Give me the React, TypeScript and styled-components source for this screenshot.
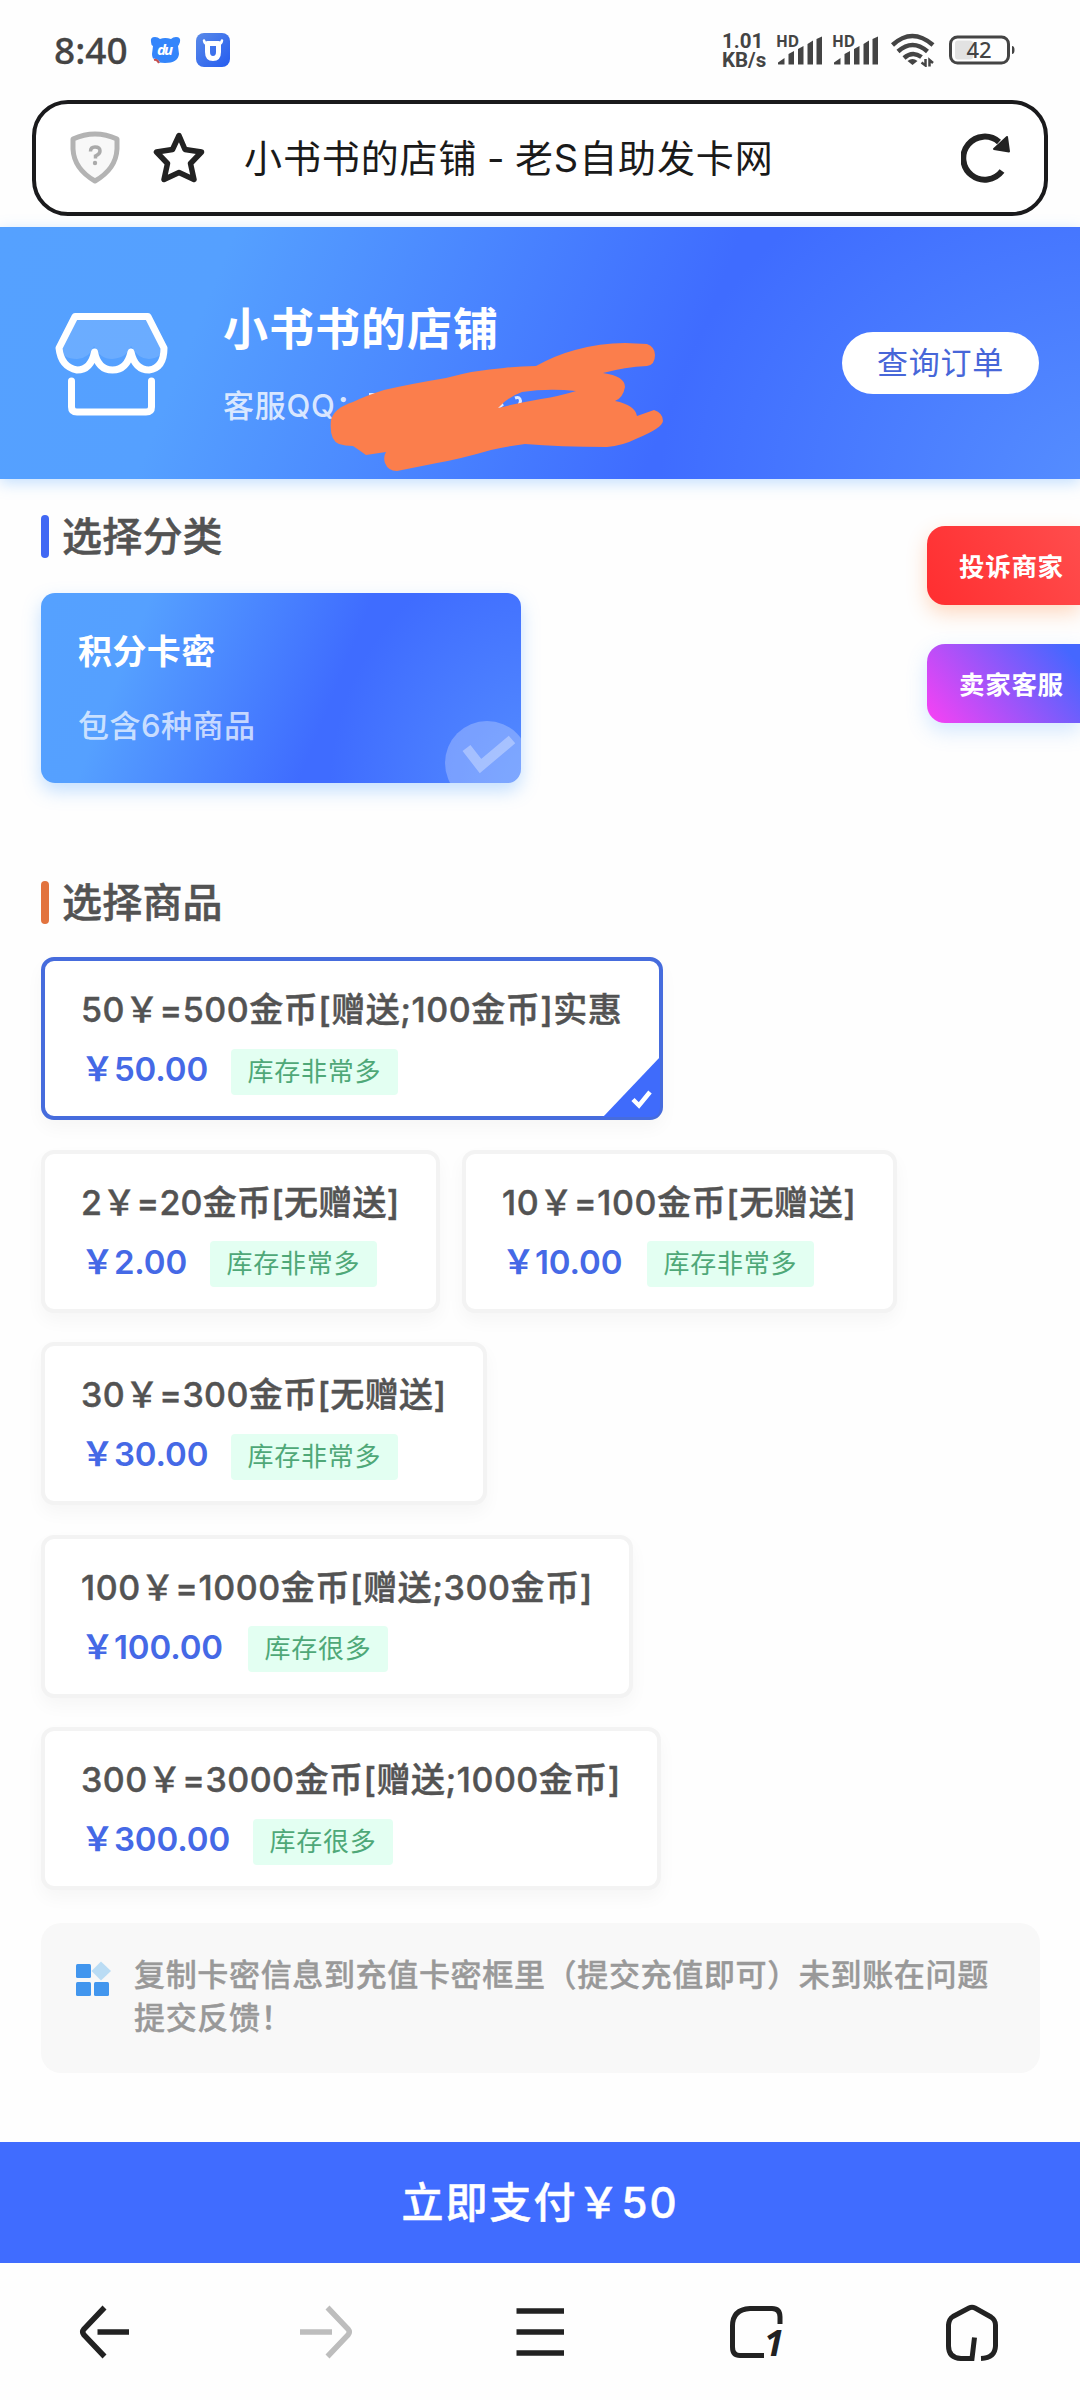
import React from 'react';
import styled, { createGlobalStyle } from 'styled-components';

const GlobalStyle = createGlobalStyle`
  * { box-sizing: border-box; }
  html, body { margin: 0; padding: 0; background: #fefefe; }
  body { font-family: Inter, "Noto Sans CJK SC", sans-serif; color: #555; }
  svg { display: block; flex: none; }
`;

const Screen = styled.div`
  width: 1080px;
  height: 2400px;
  display: flex;
  flex-direction: column;
  overflow: hidden;
  background: #fefefe;
`;

/* ---------- status bar ---------- */
const StatusBar = styled.div`
  height: 100px;
  padding: 0 65px 0 54px;
  display: flex;
  align-items: center;
  justify-content: space-between;
`;
const StatusGroup = styled.div`
  display: flex;
  align-items: center;
`;
const Clock = styled.span`
  width: 96px;
  font: 500 37px/50px "Noto Sans", sans-serif;
  color: #444;
  -webkit-text-stroke: 0.3px #444;
`;
const NetSpeed = styled.div`
  width: 54px;
  font: 700 20.5px/19.5px Roboto, sans-serif;
  color: #444;
  display: flex;
  flex-direction: column;
  padding-top: 2px;
`;
const SvgText = styled.text`
  font-family: "Noto Sans", sans-serif;
`;
const OverflowIcon = styled.svg`
  overflow: visible;
`;

/* ---------- address bar ---------- */
const AddressBar = styled.div`
  height: 116px;
  margin: 0 32px 11px;
  border: 4px solid #1a1a1c;
  border-radius: 36px;
  background: #fff;
  display: flex;
  align-items: center;
  padding: 0 33px 0 34px;
`;
const StarIcon = styled.svg`
  margin-left: 33px;
`;
const PageTitle = styled.span`
  flex: 1;
  margin-left: 39px;
  font-size: 38px;
  line-height: 50px;
  letter-spacing: 0.9px;
  word-spacing: -2px;
  color: #1a1a1a;
  white-space: pre;
`;

/* ---------- shop header ---------- */
const ShopHeader = styled.header`
  position: relative;
  height: 252px;
  flex: none;
  padding: 0 41px 0 54px;
  display: flex;
  align-items: center;
  background:
    radial-gradient(ellipse 42% 150% at 103% 105%, #568fff 0%, rgba(86, 143, 255, 0) 100%),
    linear-gradient(112deg, #55a1ff 0%, #55a0ff 20%, #3f6cff 63%);
  box-shadow: 0 4px 14px rgba(85, 165, 255, 0.35);
`;
const ShopIcon = styled.svg`
  margin-top: 24px;
`;
const ShopInfo = styled.div`
  flex: 1;
  margin-left: 54px;
  display: flex;
  flex-direction: column;
  gap: 26px;
  padding-top: 23px;
`;
const ShopName = styled.h1`
  margin: 0;
  font-size: 45px;
  line-height: 56px;
  font-weight: 700;
  letter-spacing: 1px;
  color: #fff;
`;
const ShopContact = styled.div`
  font-size: 31px;
  line-height: 44px;
  font-weight: 500;
  letter-spacing: 0.7px;
  color: rgba(255, 255, 255, 0.8);
`;
const OrderButton = styled.button`
  width: 197px;
  height: 62px;
  margin-top: 20px;
  border: 0;
  border-radius: 31px;
  background: #fff;
  color: #4766d8;
  font: 400 31px/60px Inter, "Noto Sans CJK SC", sans-serif;
  letter-spacing: 0.8px;
  padding: 0;
`;
const Scribble = styled.svg`
  position: absolute;
  left: 320px;
  top: 103px;
`;

/* ---------- floating side buttons ---------- */
const SideDock = styled.div`
  position: absolute;
  right: 0;
  top: 47px;
  display: flex;
  flex-direction: column;
  gap: 39px;
`;
const SideButton = styled.button<{ $bg: string; $glow: string }>`
  width: 153px;
  height: 79px;
  border: 0;
  border-radius: 18px 0 0 18px;
  background: ${(p) => p.$bg};
  box-shadow: 0 8px 20px ${(p) => p.$glow};
  color: #fff;
  font: 700 25.5px/40px Inter, "Noto Sans CJK SC", sans-serif;
  letter-spacing: 0.7px;
  padding: 2px 0 0 32px;
  text-align: left;
`;

/* ---------- body ---------- */
const Content = styled.main`
  position: relative;
  height: 1663px;
  flex: none;
  padding: 34px 40px 0 41px;
`;
const SectionTitle = styled.h2<{ $accent: string }>`
  margin: 0;
  height: 46px;
  display: flex;
  align-items: center;
  gap: 13px;
  font-size: 40px;
  line-height: 46px;
  font-weight: 500;
  letter-spacing: 0.2px;
  color: #535353;
  -webkit-text-stroke: 0.5px #535353;
  &::before {
    content: '';
    width: 8px;
    height: 43px;
    border-radius: 4px;
    background: ${(p) => p.$accent};
  }
`;
const SectionLabel = styled.span`
  padding-top: 1px;
`;
const CategoryCard = styled.div`
  position: relative;
  width: 480px;
  height: 190px;
  margin: 34px 0 96px;
  padding: 36px 37px 0;
  border-radius: 14px;
  overflow: hidden;
  background:
    radial-gradient(ellipse 45% 130% at 105% 105%, #568fff 0%, rgba(86, 143, 255, 0) 100%),
    linear-gradient(112deg, #55a1ff 0%, #55a0ff 20%, #3f6cff 60%);
  box-shadow: 0 8px 18px rgba(85, 165, 255, 0.35);
`;
const CategoryName = styled.div`
  font-size: 34px;
  line-height: 46px;
  font-weight: 700;
  letter-spacing: 0.4px;
  color: #fff;
`;
const CategoryCount = styled.div`
  margin-top: 28px;
  font-size: 31px;
  line-height: 46px;
  font-weight: 500;
  letter-spacing: 0.5px;
  color: rgba(255, 255, 255, 0.7);
`;
const CategoryCheck = styled.svg`
  position: absolute;
  right: 0;
  bottom: 0;
`;

const ProductList = styled.div`
  display: flex;
  flex-wrap: wrap;
  gap: 29.5px 22px;
  margin-top: 32px;
`;
const ProductCard = styled.div<{ $selected?: boolean; $width: number }>`
  position: relative;
  width: ${(p) => p.$width}px;
  height: 163px;
  border: 4px solid ${(p) => (p.$selected ? '#466cdd' : '#f3f3f3')};
  border-radius: 13px;
  background: #fff;
  box-shadow: 0 8px 18px rgba(0, 0, 0, 0.035);
  padding: 25px 0 0 36px;
`;
const ProductName = styled.div<{ $spacing: number }>`
  font-size: 34px;
  line-height: 48px;
  font-weight: 500;
  letter-spacing: ${(p) => p.$spacing}px;
  color: #535353;
  -webkit-text-stroke: 0.45px #535353;
  white-space: nowrap;
`;
const ProductMeta = styled.div`
  display: flex;
  align-items: center;
  margin-top: 11px;
  height: 48px;
`;
const Price = styled.span<{ $width: number }>`
  width: ${(p) => p.$width}px;
  font-size: 33px;
  line-height: 46px;
  font-weight: 600;
  letter-spacing: -0.1px;
  color: #4569e6;
  white-space: nowrap;
`;
const Stock = styled.span`
  height: 46px;
  margin-top: 5px;
  padding: 0 16.5px;
  border-radius: 4px;
  background: #e3fff2;
  color: #4fa878;
  font-size: 26px;
  line-height: 46px;
  letter-spacing: 0.75px;
  white-space: nowrap;
`;
const SelectedCorner = styled.svg`
  position: absolute;
  right: -1px;
  bottom: -1px;
`;

const Notice = styled.div`
  margin-top: 33px;
  height: 150px;
  padding: 31px 40px 0 35px;
  border-radius: 20px;
  background: #f8f8f8;
  display: flex;
  align-items: flex-start;
  gap: 23px;
`;
const NoticeText = styled.p`
  margin: 0;
  font-size: 31px;
  line-height: 42.5px;
  font-weight: 500;
  letter-spacing: 0.66px;
  color: #999;
  -webkit-text-stroke: 0.4px #999;
`;
const NoticeIcon = styled.svg`
  margin-top: 7px;
`;

const PayBar = styled.button`
  height: 121px;
  flex: none;
  border: 0;
  padding: 0;
  background: #406cff;
  color: #fff;
  font: 500 42px/60px Inter, "Noto Sans CJK SC", sans-serif;
  letter-spacing: 2px;
  -webkit-text-stroke: 0.5px #fff;
`;
const BrowserNav = styled.nav`
  flex: 1;
  display: grid;
  grid-template-columns: repeat(5, 216px);
  justify-items: center;
  align-items: center;
  padding-bottom: 1px;
  background: #fefefe;
`;

const Bars = () => (
  <OverflowIcon width="56" height="34" viewBox="0 0 56 34" fill="#444">
    <SvgText x="0" y="13.5" fontSize="15.5" fontWeight="700">HD</SvgText>
    <path d="M2 31V29.5L8.500 25V31.500H3Q2 31.500 2 31ZM12.500 31.500V21L18 18V31.500ZM22 31.500V16L27.500 13V31.500ZM31.500 31.500V11L37 7.500V31.500ZM40.500 31.500V6L46 3.500V31.500Z" />
  </OverflowIcon>
);

interface Product {
  name: string;
  price: string;
  stock: string;
  width: number;
  spacing: number;
  priceWidth: number;
  selected?: boolean;
}

const products: Product[] = [
  { name: '50￥=500金币[赠送;100金币]实惠', price: '￥50.00', stock: '库存非常多', width: 622, spacing: 0.52, priceWidth: 150, selected: true },
  { name: '2￥=20金币[无赠送]', price: '￥2.00', stock: '库存非常多', width: 399, spacing: 0.25, priceWidth: 129 },
  { name: '10￥=100金币[无赠送]', price: '￥10.00', stock: '库存非常多', width: 435, spacing: 0.62, priceWidth: 145 },
  { name: '30￥=300金币[无赠送]', price: '￥30.00', stock: '库存非常多', width: 446, spacing: 0.36, priceWidth: 150 },
  { name: '100￥=1000金币[赠送;300金币]', price: '￥100.00', stock: '库存很多', width: 592, spacing: 0.58, priceWidth: 167 },
  { name: '300￥=3000金币[赠送;1000金币]', price: '￥300.00', stock: '库存很多', width: 620, spacing: 0.5, priceWidth: 172 },
];

export default function App() {
  return (
    <Screen>
      <GlobalStyle />
      <StatusBar>
        <StatusGroup>
          <Clock>8:40</Clock>
          <svg width="46" height="34" viewBox="0 0 46 34">
            <path d="M1 9Q0 4 5 4Q8 4 10 6Q15 4 21 6Q23 4 26 4Q31 4 30 9Q29 12 28 13L29 21Q28 30 15 30Q2 30 2 21L3 13Q1 12 1 9Z" fill="#3385fb" />
            <path d="M2 26Q6 24 10 29L5 30Z" fill="#fff" />
            <path d="M4 27Q7 26 9 30" fill="none" stroke="#c5504e" strokeWidth="2" />
            <SvgText x="7" y="22" fontSize="15" fontWeight="700" fontStyle="italic" fill="#fff" textLength="16">du</SvgText>
          </svg>
          <svg width="34" height="34" viewBox="0 0 34 34">
            <defs>
              <linearGradient id="ox" x1="0" y1="0" x2="1" y2="1">
                <stop offset="0" stopColor="#5a8ae8" />
                <stop offset="1" stopColor="#245cf0" />
              </linearGradient>
            </defs>
            <rect width="34" height="34" rx="8" fill="url(#ox)" />
            <path d="M8 7.500Q8.500 11 12 11M26 7.500Q25.500 11 22 11" stroke="#fff" strokeWidth="2.500" fill="none" strokeLinecap="round" />
            <path d="M11.500 10.500H22.500V19Q22.500 25.500 17 25.500Q11.500 25.500 11.500 19Z" fill="none" stroke="#fff" strokeWidth="5" strokeLinejoin="round" />
          </svg>
        </StatusGroup>
        <StatusGroup>
          <NetSpeed>
            <span>1.01</span>
            <span>KB/s</span>
          </NetSpeed>
          <Bars />
          <Bars />
          <svg width="60" height="34" viewBox="0 0 60 34" fill="none" stroke="#444" strokeWidth="4.500">
            <path d="M4.500 12Q24 -6 45 12" />
            <path d="M10 18.500Q24.500 5.500 39.500 18.500" />
            <path d="M16 25Q24.500 17.500 33.500 24" />
            <path d="M24.500 32L19.500 28Q24.500 24 29.500 28Z" fill="#444" stroke="none" />
            <path d="M37.500 26V32.500L33.500 29.500M41.500 33.500V27L45 30" strokeWidth="2.500" />
          </svg>
          <svg width="67" height="34" viewBox="0 0 67 34">
            <rect x="2.500" y="4" width="58" height="26" rx="7" fill="none" stroke="#444" strokeWidth="3" />
            <rect x="7" y="7.500" width="18" height="19" rx="3" fill="#e2e2e2" />
            <path d="M64 13Q66.500 13 66.500 17Q66.500 21 64 21Z" fill="#444" />
            <SvgText x="18.500" y="25" fontSize="22" fontWeight="500" fill="#444">42</SvgText>
          </svg>
        </StatusGroup>
      </StatusBar>

      <AddressBar>
        <svg width="50" height="54" viewBox="0 0 50 54">
          <path d="M3 8Q25 -2 47 8V18Q46 38 25 50Q4 38 3 18Z" fill="#f8f8f8" stroke="#b3b3b3" strokeWidth="5" strokeLinejoin="round" />
          <path d="M20.500 20.500Q20.500 16 25 16Q30 16 30 20Q30 23 25.500 25V27.500" fill="none" stroke="#aaa" strokeWidth="3.500" />
          <circle cx="25" cy="32" r="2.200" fill="#aaa" />
        </svg>
        <StarIcon width="52" height="54" viewBox="0 0 52 54">
          <path d="M26 4.500L32 18.500L48.500 21L37.500 32.500L41 48.500L26 41.500L11 48.500L14.500 32.500L3.500 21L19.500 18.500Z" fill="none" stroke="#222" strokeWidth="5.500" strokeLinejoin="round" />
        </StarIcon>
        <PageTitle>小书书的店铺 - 老S自助发卡网</PageTitle>
        <svg width="50" height="54" viewBox="0 0 50 54">
          <path d="M41 40A21.500 21.500 0 1 1 38 11" fill="none" stroke="#222" strokeWidth="6" />
          <path d="M46 6L48 20.500L33 18Z" fill="#222" stroke="#222" strokeWidth="2" strokeLinejoin="round" />
        </svg>
      </AddressBar>

      <ShopHeader>
        <ShopIcon width="115" height="110" viewBox="0 0 115 110">
          <path d="M21 6L7 38Q8 49 23 49Q36 48 40 36Q46 49 58 49Q73 48 77 36Q84 49 95 49Q108 48 109 38L94 6Z" fill="#fff" opacity="0.13" />
          <path d="M21 6.500H94L110 38Q110 58 95 60Q81 60 77 42Q73 60 58.500 60Q44 60 40.500 42Q37 60 23 60Q7 57 5 38Z" fill="none" stroke="#fff" strokeWidth="7" strokeLinejoin="round" />
          <path d="M17.500 71V97Q17.500 102 23 102H92Q97.500 102 97.500 97V71" fill="none" stroke="#fff" strokeWidth="7" strokeLinecap="round" />
        </ShopIcon>
        <ShopInfo>
          <ShopName>小书书的店铺</ShopName>
          <ShopContact>客服QQ：</ShopContact>
        </ShopInfo>
        <OrderButton>查询订单</OrderButton>
        <Scribble width="360" height="149" viewBox="320 330 360 149">
          <path d="M369 394.500H377M515 398Q520 396 520.500 401Q520 405 517 407M498 408L503 404" stroke="#dce8ff" strokeWidth="3" fill="none" />
          <path
            fillRule="evenodd"
            fill="#fb7e4c"
            d="M331 420Q334 408 353 402Q365 396 384 390Q410 384 446 378Q475 370 504 368Q520 366 536 366Q556 355 575 350Q600 343 625 343L647 344Q655 347 655 355Q655 365 647 366Q625 367 603 373Q625 376 625 387Q623 398 615 401Q635 405 637 416L654 410Q663 413 663 421Q662 428 638 438Q622 446 607 447Q560 447 525 444Q508 446 491 450Q460 459 437 463L397 471Q388 471 385 463Q383 457 386 452L366 455Q359 450 353 446Q345 446 339 444Q329 440 331 420ZM498 408Q508 397 522 392Q548 388 576 391Q560 396 541 399Q518 403 498 408Z"
          />
        </Scribble>
      </ShopHeader>

      <Content>
        <SideDock>
          <SideButton $bg="linear-gradient(60deg, #ff2e30, #ff4d4d)" $glow="rgba(255, 130, 50, 0.3)">投诉商家</SideButton>
          <SideButton $bg="linear-gradient(50deg, #f043f4 5%, #4567ff 92%)" $glow="rgba(85, 165, 255, 0.25)">卖家客服</SideButton>
        </SideDock>

        <SectionTitle $accent="#4168f4"><SectionLabel>选择分类</SectionLabel></SectionTitle>
        <CategoryCard>
          <CategoryName>积分卡密</CategoryName>
          <CategoryCount>包含6种商品</CategoryCount>
          <CategoryCheck width="80" height="66" viewBox="0 0 80 66">
            <circle cx="46" cy="46" r="42" fill="#fff" opacity="0.25" />
            <path d="M25.500 31L39.500 49L71 22.500" fill="none" stroke="#fff" strokeWidth="10" opacity="0.33" />
          </CategoryCheck>
        </CategoryCard>
        <SectionTitle $accent="#e2733e"><SectionLabel>选择商品</SectionLabel></SectionTitle>

        <ProductList>
          {products.map((p) => (
            <ProductCard key={p.name} $selected={p.selected} $width={p.width}>
              <ProductName $spacing={p.spacing}>{p.name}</ProductName>
              <ProductMeta>
                <Price $width={p.priceWidth}>{p.price}</Price>
                <Stock>{p.stock}</Stock>
              </ProductMeta>
              {p.selected && (
                <SelectedCorner width="57" height="60" viewBox="0 0 57 60">
                  <path d="M57 0V51Q57 60 48 60H0Z" fill="#3f6bfb" />
                  <path d="M30 42.500L36 48.500L47 35" fill="none" stroke="#fff" strokeWidth="4.500" />
                </SelectedCorner>
              )}
            </ProductCard>
          ))}
        </ProductList>

        <Notice>
          <NoticeIcon width="35" height="36" viewBox="0 0 35 36">
            <rect x="0" y="3" width="15" height="14" rx="1.500" fill="#4296ee" />
            <rect x="0" y="21" width="15" height="14" rx="1.500" fill="#4296ee" />
            <rect x="18" y="21" width="15" height="14" rx="1.500" fill="#4296ee" />
            <path d="M25 0.500L35 10L25 19.500L15.500 10Z" fill="#badcf4" />
          </NoticeIcon>
          <NoticeText>复制卡密信息到充值卡密框里（提交充值即可）未到账在问题提交反馈！</NoticeText>
        </Notice>
      </Content>

      <PayBar>立即支付￥50</PayBar>

      <BrowserNav>
        <svg width="60" height="60" viewBox="0 0 60 60" fill="none" stroke="#222" strokeWidth="5.500">
          <path d="M26.500 6.500L6 28Q3.500 31 6 34L26.500 55.500M19.500 31H51" />
        </svg>
        <svg width="60" height="60" viewBox="0 0 60 60" fill="none" stroke="#bdbdbd" strokeWidth="5.500">
          <path d="M33.500 6.500L54 28Q56.500 31 54 34L33.500 55.500M6 31H38" />
        </svg>
        <svg width="60" height="60" viewBox="0 0 60 60" fill="none" stroke="#222" strokeWidth="5.500">
          <path d="M6.500 10H54M6.500 31H54M6.500 52H54" />
        </svg>
        <OverflowIcon width="60" height="60" viewBox="0 0 60 60" fill="none" stroke="#222" strokeWidth="5">
          <path d="M54 23V16Q54 7.500 46 7.500H24Q6.500 8.500 6.500 25V46Q6.500 54.500 14 54.500H38" />
          <SvgText x="38" y="54.500" fontSize="36" fontWeight="700" fontStyle="italic" fill="#222" stroke="none">1</SvgText>
        </OverflowIcon>
        <svg width="60" height="60" viewBox="0 0 60 60" fill="none" stroke="#222" strokeWidth="5">
          <path d="M32.500 36.500L30 57.500H19Q6.500 57 6.500 45V24Q7 18 11 15.500L27 7Q30 5.500 33 7L49 16Q53.500 19 53.500 24V45Q53 57 39 57.500" />
        </svg>
      </BrowserNav>
    </Screen>
  );
}
